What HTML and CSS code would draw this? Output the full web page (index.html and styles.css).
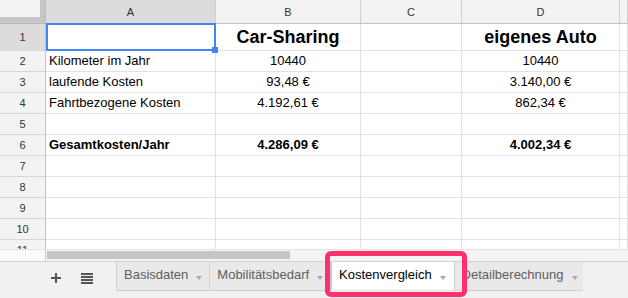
FILE: index.html
```html
<!DOCTYPE html>
<html lang="de">
<head>
<meta charset="utf-8">
<title>Kostenvergleich</title>
<link rel="stylesheet" href="styles.css">
</head>
<body>
<div class="sheet">
  <div class="grid-wrap">
    <div class="grid">
      <div class="c corner"><div class="corner-in"></div></div>
      <div class="c ch sel">A</div>
      <div class="c ch">B</div>
      <div class="c ch">C</div>
      <div class="c ch">D</div>
      <div class="c ch"></div>

      <div class="c rh sel">1</div>
      <div class="c"></div>
      <div class="c ctr big">Car-Sharing</div>
      <div class="c"></div>
      <div class="c ctr big">eigenes Auto</div>
      <div class="c"></div>

      <div class="c rh">2</div>
      <div class="c">Kilometer im Jahr</div>
      <div class="c ctr">10440</div>
      <div class="c"></div>
      <div class="c ctr">10440</div>
      <div class="c"></div>

      <div class="c rh">3</div>
      <div class="c">laufende Kosten</div>
      <div class="c ctr">93,48 €</div>
      <div class="c"></div>
      <div class="c ctr">3.140,00 €</div>
      <div class="c"></div>

      <div class="c rh">4</div>
      <div class="c">Fahrtbezogene Kosten</div>
      <div class="c ctr">4.192,61 €</div>
      <div class="c"></div>
      <div class="c ctr">862,34 €</div>
      <div class="c"></div>

      <div class="c rh">5</div>
      <div class="c"></div>
      <div class="c"></div>
      <div class="c"></div>
      <div class="c"></div>
      <div class="c"></div>

      <div class="c rh">6</div>
      <div class="c b">Gesamtkosten/Jahr</div>
      <div class="c ctr b">4.286,09 €</div>
      <div class="c"></div>
      <div class="c ctr b">4.002,34 €</div>
      <div class="c"></div>

      <div class="c rh">7</div>
      <div class="c"></div><div class="c"></div><div class="c"></div><div class="c"></div><div class="c"></div>
      <div class="c rh">8</div>
      <div class="c"></div><div class="c"></div><div class="c"></div><div class="c"></div><div class="c"></div>
      <div class="c rh">9</div>
      <div class="c"></div><div class="c"></div><div class="c"></div><div class="c"></div><div class="c"></div>
      <div class="c rh">10</div>
      <div class="c"></div><div class="c"></div><div class="c"></div><div class="c"></div><div class="c"></div>
      <div class="c rh">11</div>
      <div class="c"></div><div class="c"></div><div class="c"></div><div class="c"></div><div class="c"></div>
    </div>
    <div class="selection"></div>
    <div class="handle"></div>
  </div>

  <div class="hscroll">
    <div class="hs-corner"></div>
    <div class="track"><div class="thumb"></div></div>
  </div>

  <div class="tabbar">
    <div class="tools">
      <svg class="ico" width="10" height="10" viewBox="0 0 10 10"><rect x="0" y="4" width="10" height="2" fill="#555"/><rect x="4" y="0" width="2" height="10" fill="#555"/></svg>
      <svg class="ico" width="12" height="11" viewBox="0 0 12 11"><rect x="0" y="0" width="12" height="2" fill="#555"/><rect x="0" y="3" width="12" height="2" fill="#555"/><rect x="0" y="6" width="12" height="2" fill="#555"/><rect x="0" y="9" width="12" height="2" fill="#555"/></svg>
    </div>
    <div class="tabs">
      <div class="tab">Basisdaten<span class="arr"></span></div>
      <div class="tab">Mobilitätsbedarf<span class="arr"></span></div>
      <div class="tab active">Kostenvergleich<span class="arr"></span></div>
      <div class="tab">Detailberechnung<span class="arr"></span></div>
    </div>
  </div>
  <div class="highlight"></div>
</div>
</body>
</html>
```

FILE: styles.css
```css
* { box-sizing: border-box; }
body {
  margin: 0;
  font-family: "Liberation Sans", Arial, sans-serif;
  background: #fff;
  width: 628px;
  height: 298px;
  overflow: hidden;
}
.sheet { position: relative; width: 628px; height: 298px; }

.grid-wrap { position: relative; height: 249px; overflow: hidden; }
.grid {
  display: grid;
  grid-template-columns: 46px 170px 145px 101px 158px 1fr;
  grid-template-rows: 24px 27px repeat(10, 21px);
}
.c {
  border-right: 1px solid #e2e2e2;
  border-bottom: 1px solid #e2e2e2;
  font-size: 13px;
  line-height: 16px;
  color: #000;
  padding: 0 3px 2px;
  display: flex;
  align-items: flex-end;
  white-space: nowrap;
  overflow: hidden;
}
.ctr { justify-content: center; }
.b { font-weight: bold; }
.big { font-size: 18px; line-height: 22px; font-weight: bold; }
.ch, .rh {
  background: #f3f3f3;
  font-size: 11px;
  color: #333;
  justify-content: center;
  align-items: center;
  padding: 0;
}
.ch { border-right-color: #cfcfcf; border-bottom-color: #c4c4c4; }
.rh { border-right-color: #c4c4c4; border-bottom-color: #d6d6d6; }
.sel { background: #dcdcdc; }
.corner {
  background: #c6c6c6;
  border-right-color: #b8b8b8;
  border-bottom-color: #b8b8b8;
  padding: 0;
  align-items: flex-start;
}
.corner-in { width: 40px; height: 17px; background: #f3f3f3; }

.selection {
  position: absolute;
  left: 46px;
  top: 23px;
  width: 170px;
  height: 28px;
  border: 2px solid #4285f4;
}
.handle {
  position: absolute;
  left: 212px;
  top: 47px;
  width: 6px;
  height: 6px;
  background: #4285f4;
}

.hscroll {
  display: flex;
  height: 12px;
  border-top: 1px solid #e2e2e2;
}
.hs-corner { width: 46px; background: #fafafa; border-right: 1px solid #d0d0d0; }
.track { flex: 1; background: #f4f4f4; padding: 1px 0 0 1px; }
.thumb { width: 243px; height: 8px; background: #c5c5c5; }

.tabbar {
  display: flex;
  height: 37px;
  border-top: 1px solid #d2d2d2;
  background: #f1f1f1;
}
.tools {
  width: 116px;
  display: flex;
  align-items: flex-start;
  gap: 20px;
  padding: 11px 0 0 51px;
}
.ico { display: block; }
.tabs {
  display: flex;
  width: 467px;
  overflow: hidden;
  align-items: flex-start;
}
.tab {
  flex: none;
  height: 29px;
  display: flex;
  align-items: center;
  padding: 0 7px 2px 7px;
  border-left: 1px solid #d2d2d2;
  border-bottom: 1px solid #cfcfcf;
  background: #e9e9e9;
  font-size: 13px;
  line-height: 16px;
  color: #5e5e5e;
  white-space: nowrap;
}
.arr {
  align-self: flex-start;
  margin: 14px 0 0 8px;
  width: 0;
  height: 0;
  border-left: 3.5px solid transparent;
  border-right: 3.5px solid transparent;
  border-top: 4px solid #a8a8a8;
}
.tab.active {
  background: #fff;
  color: #000;
  border-left: 2px solid #c8c8c8;
  border-bottom-color: #e0e0e0;
  padding-right: 8px;
}

.highlight {
  position: absolute;
  left: 325px;
  top: 251px;
  width: 142px;
  height: 46px;
  border: 5px solid #fd2f6d;
  border-radius: 6px;
}
```
